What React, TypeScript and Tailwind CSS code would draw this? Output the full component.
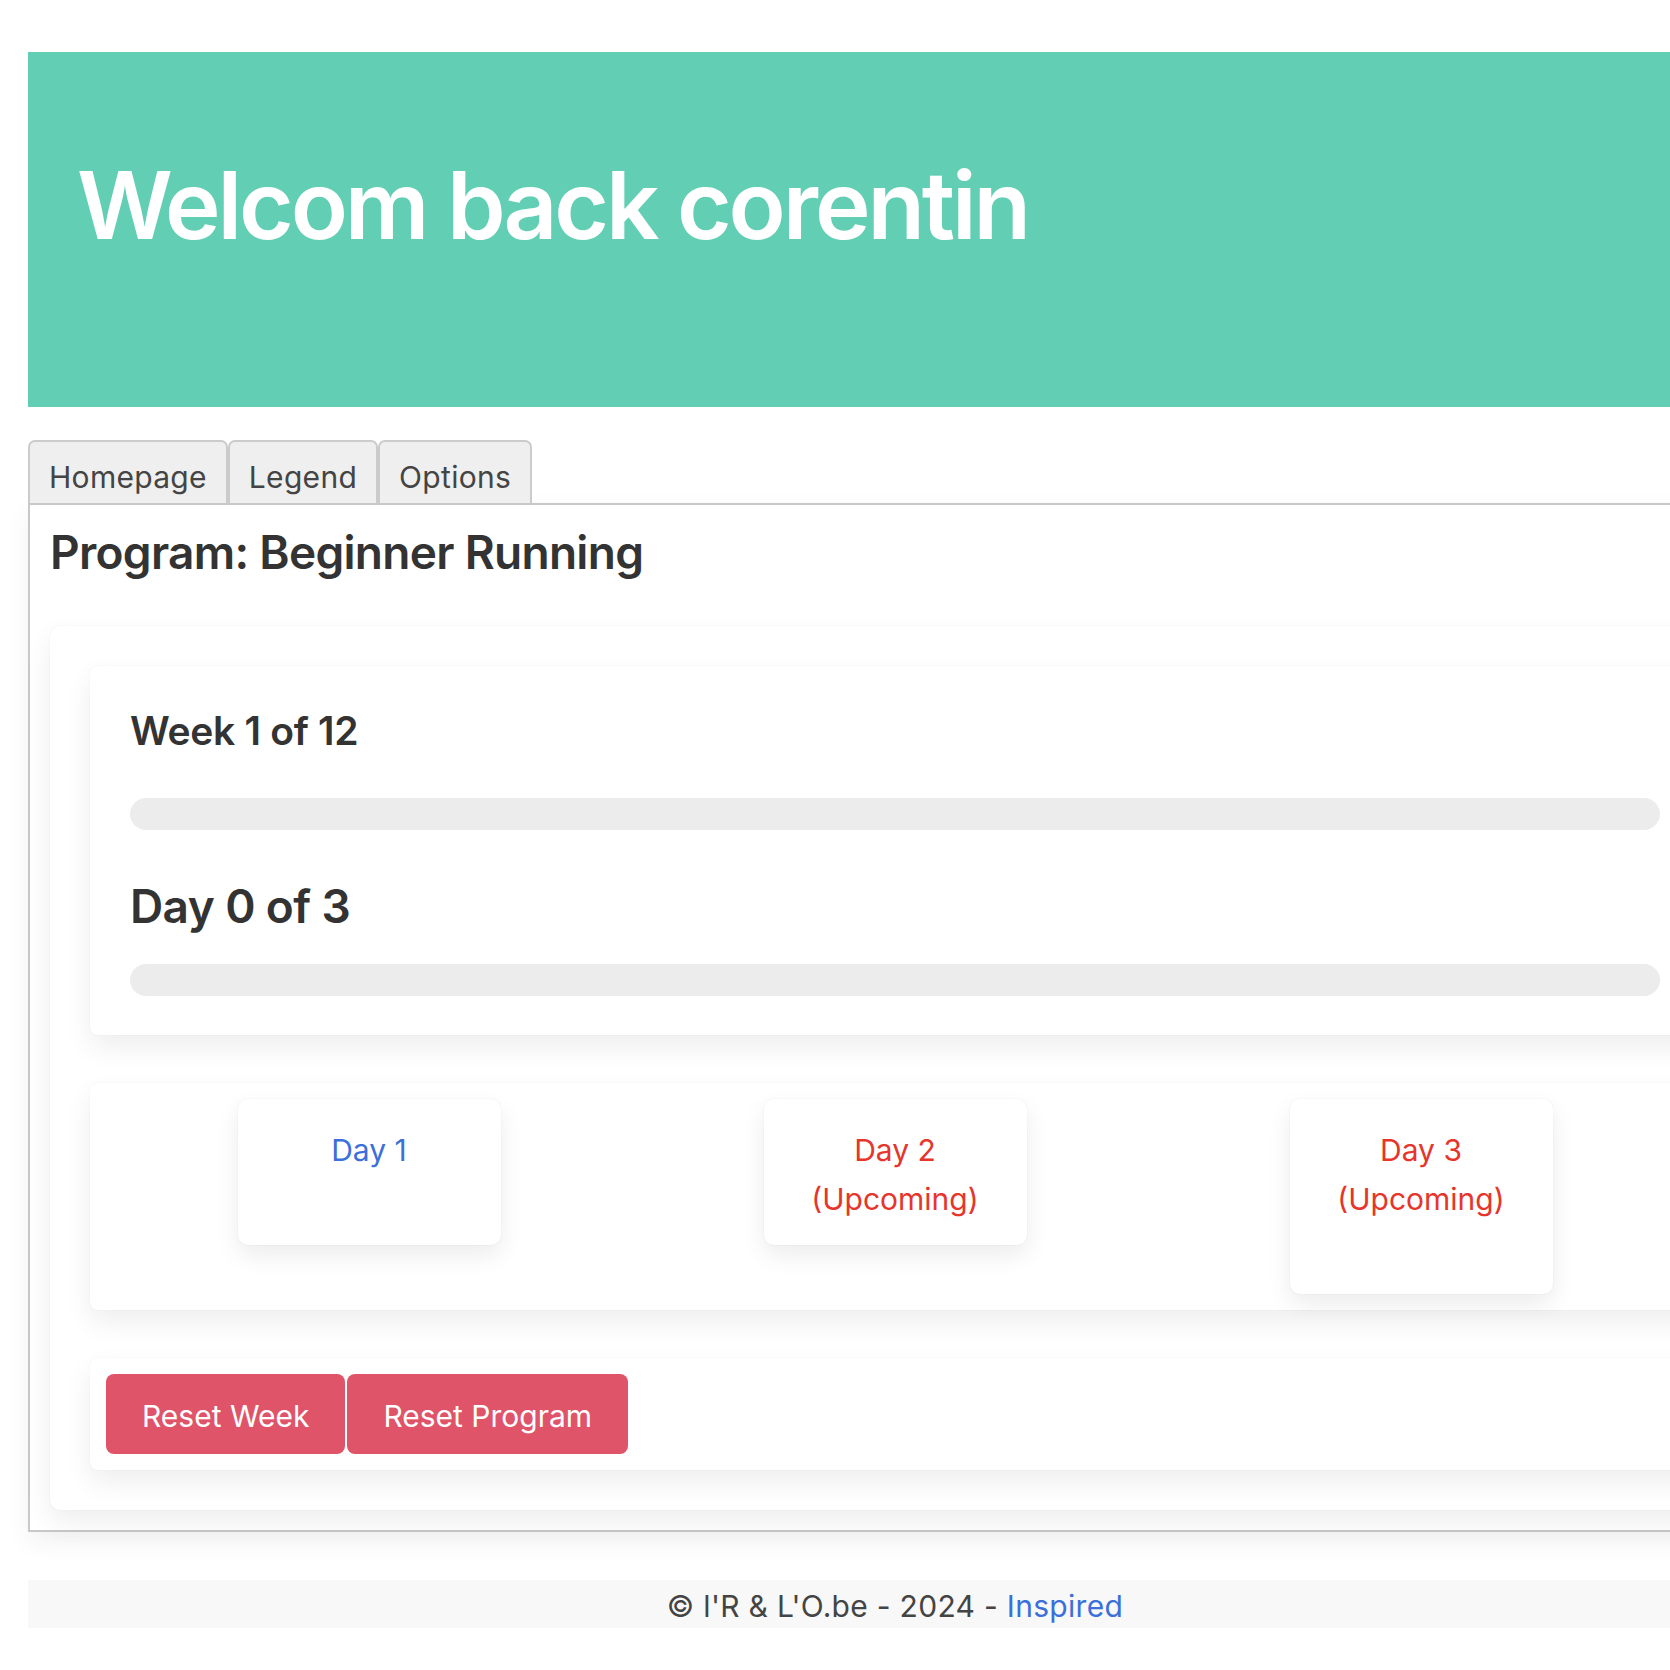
import React from "react";

const cardShadow =
  "shadow-[0_0_2px_rgba(0,0,0,0.06),0_12px_28px_rgba(0,0,0,0.07)]";

function DayCard({
  title,
  sub,
  extra,
  color,
}: {
  title: string;
  sub?: string;
  extra?: boolean;
  color: string;
}) {
  return (
    <div
      className={`w-[263px] rounded-[10px] bg-white pt-[27px] pb-[21px] text-center text-[30px] leading-[49px] shadow-[0_0_2px_rgba(0,0,0,0.07),0_10px_24px_rgba(0,0,0,0.08)] ${color}`}
    >
      <div>{title}</div>
      <div>{sub ? sub : "\u00a0"}</div>
      {extra ? <div>{"\u00a0"}</div> : null}
    </div>
  );
}

export default function App() {
  return (
    <div className="w-[1670px] h-[1670px] overflow-hidden bg-white font-['Inter','Liberation_Sans',sans-serif] text-[#333]">
      <div className="w-[1734px] ml-[28px] pt-[52px]">
        <header className="h-[355px] bg-[#62cfb4] pl-[49px] pt-[97px]">
          <h1 className="text-[94px] leading-[1.2] font-semibold text-white tracking-[-3.1px]">
            Welcom back corentin
          </h1>
        </header>

        <nav className="mt-[33px] flex items-end">
          {["Homepage", "Legend", "Options"].map((t) => (
            <div
              key={t}
              className="h-[63px] border-2 border-b-0 border-[#cbcbcb] rounded-t-[7px] bg-[#efefef] px-[19px] pt-[15px] text-[30px] leading-[40px] tracking-[0.3px] text-[#444]"
            >
              {t}
            </div>
          ))}
        </nav>

        <section className="border-2 border-[#c8c8c8] px-[20px] pt-[20px] pb-[20px] shadow-[0_10px_24px_rgba(0,0,0,0.06)]">
          <h2 className="text-[46px] leading-[1.2] font-semibold text-[#333] mb-[46px] tracking-[-0.7px]">
            Program: Beginner Running
          </h2>

          <div className={`rounded-[10px] bg-white p-[40px] flex flex-col gap-[48px] ${cardShadow}`}>
            <div className={`rounded-[8px] bg-white px-[40px] pt-[42px] pb-[39px] ${cardShadow}`}>
              <h3 className="text-[39px] leading-[46px] font-semibold text-[#333] tracking-[-0.3px]">
                Week 1 of 12
              </h3>
              <div className="mt-[44px] h-[32px] rounded-full bg-[#ececec]" />
              <h2 className="mt-[49px] text-[46px] leading-[1.2] font-semibold text-[#333] tracking-[-0.6px]">
                Day 0 of 3
              </h2>
              <div className="mt-[30px] h-[32px] rounded-full bg-[#ececec]" />
            </div>

            <div className={`rounded-[8px] bg-white p-[16px] grid grid-cols-3 items-start justify-items-center ${cardShadow}`}>
              <DayCard title="Day 1" color="text-[#3b6fd9]" />
              <DayCard title="Day 2" sub="(Upcoming)" color="text-[#e6352b]" />
              <DayCard title="Day 3" sub="(Upcoming)" extra color="text-[#e6352b]" />
            </div>

            <div className={`rounded-[8px] bg-white p-[16px] flex ${cardShadow}`}>
              <button className="h-[80px] rounded-[8px] bg-[#df5469] px-[36px] pt-[5px] text-[30px] text-white">
                Reset Week
              </button>
              <button className="ml-[2px] h-[80px] rounded-[8px] bg-[#df5469] px-[36px] pt-[5px] text-[30px] text-white">
                Reset Program
              </button>
            </div>
          </div>
        </section>

        <footer className="mt-[48px] h-[48px] bg-[#f8f8f8] pt-[2px] text-center text-[30px] leading-[48px] tracking-[0.3px] text-[#444]">
          © l'R &amp; L'O.be - 2024 - <a className="text-[#3b6fd9]">Inspired</a>
        </footer>
      </div>
    </div>
  );
}
